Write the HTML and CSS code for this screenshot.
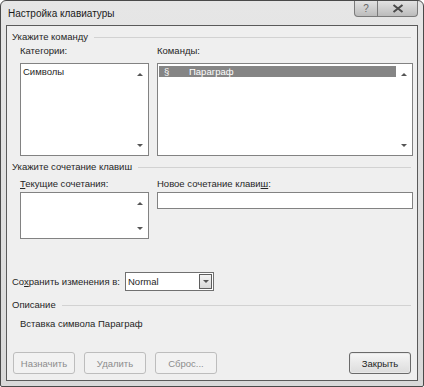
FILE: index.html
```html
<!DOCTYPE html>
<html lang="ru">
<head>
  <meta charset="UTF-8">
  <title>Настройка клавиатуры</title>
  <link rel="stylesheet" href="styles.css">
</head>
<body>

  <div class="window">
    <!-- Заголовок -->
    <div class="titlebar">
      <span class="title">Настройка клавиатуры</span>
      <div class="title-buttons">
        <div class="tbtn tbtn-help">?</div>
        <div class="tbtn tbtn-close">
          <svg width="12" height="9" viewBox="0 0 12 9"><path d="M1.5 1 L10.5 8 M10.5 1 L1.5 8" stroke="#4a4a4a" stroke-width="2" fill="none"/></svg>
        </div>
      </div>
    </div>

    <div class="client">
      <!-- Укажите команду -->
      <div class="group-title g1">Укажите команду</div>
      <div class="cols">
        <div class="col col-left">
          <div class="label">Категории:</div>
          <div class="listbox lb-big">
            <div class="item">Символы</div>
            <div class="scroll">
              <span class="arr up"></span>
              <span class="arr down"></span>
            </div>
          </div>
        </div>
        <div class="col col-right">
          <div class="label">Коман<u>д</u>ы:</div>
          <div class="listbox lb-big">
            <div class="item selected"><span class="sym">§</span>Параграф</div>
            <div class="scroll">
              <span class="arr up"></span>
              <span class="arr down"></span>
            </div>
          </div>
        </div>
      </div>

      <!-- Укажите сочетание клавиш -->
      <div class="group-title g2">Укажите сочетание клавиш</div>
      <div class="cols cols2">
        <div class="col col-left">
          <div class="label"><u>Т</u>екущие сочетания:</div>
          <div class="listbox lb-small">
            <div class="scroll">
              <span class="arr up"></span>
              <span class="arr down"></span>
            </div>
          </div>
        </div>
        <div class="col col-right">
          <div class="label">Новое сочетание клави<u>ш</u>:</div>
          <div class="textbox"></div>
        </div>
      </div>

      <div class="save-row">
        <span class="save-label">Со<u>х</u>ранить изменения в:</span>
        <div class="combo">
          <span class="combo-text">Normal</span>
          <div class="combo-btn"><span class="arr down"></span></div>
        </div>
      </div>

      <div class="group-title g3">Описание</div>
      <div class="desc">Вставка символа Параграф</div>

      <div class="buttons">
        <button class="btn" disabled>Назначить</button>
        <button class="btn" disabled>Удалить</button>
        <button class="btn" disabled>Сброс...</button>
        <span class="spacer"></span>
        <button class="btn btn-close">Закрыть</button>
      </div>
    </div>
  </div>

</body>
</html>
```

FILE: styles.css
```css
body {
  margin: 0;
  padding: 0;
  background: #fff;
  font-family: "Liberation Sans", Arial, sans-serif;
  font-size: 9.5px;
  color: #262626;
}

.window {
  width: 424px;
  height: 387px;
  box-sizing: border-box;
  border: 1px solid #4a4a4a;
  border-radius: 6px 6px 2px 2px;
  background: linear-gradient(to bottom, #e6e6e6, #d9d9d9);
  padding: 0 5px 5px 5px;
  display: flex;
  flex-direction: column;
}

.titlebar {
  height: 24px;
  display: flex;
  align-items: flex-start;
  justify-content: space-between;
}

.title {
  font-size: 10px;
  margin: 7px 0 0 2px;
  color: #1a1a1a;
}

.title-buttons {
  display: flex;
}

.tbtn {
  height: 15px;
  border: 1px solid #7a7a7a;
  border-top: none;
  background: linear-gradient(to bottom, #e2e2e2, #bbbbbb);
  display: flex;
  align-items: center;
  justify-content: center;
  color: #666;
  font-size: 10px;
}

.tbtn-help {
  width: 22px;
  border-radius: 0 0 0 4px;
}

.tbtn-close {
  width: 39px;
  border-left: none;
  border-radius: 0 0 4px 0;
}

.client {
  flex: 1;
  border: 1px solid #5a5a5a;
  background: #efefef;
  padding: 0 4px 0 5px;
  display: flex;
  flex-direction: column;
}

.group-title {
  display: flex;
  align-items: center;
  height: 14px;
  line-height: 14px;
}

.group-title::after {
  content: "";
  flex: 1;
  border-top: 1px solid #d2d2d2;
  margin: 0 2px 0 6px;
}

.g1 {
  margin-top: 4px;
}

.g2 {
  margin-top: 4px;
}

.g3 {
  margin-top: 7px;
}

.cols {
  display: flex;
  padding-left: 8px;
}

.col-left {
  width: 137px;
}

.col-right {
  flex: 1;
}

.label {
  height: 14px;
  line-height: 14px;
  margin-bottom: 5px;
}

.cols2 {
  margin-top: 3px;
}

.cols2 .label {
  margin-bottom: 1px;
}

.listbox {
  position: relative;
  background: #fff;
  border: 1px solid #828282;
  box-sizing: border-box;
}

.col-left .listbox {
  width: 129px;
}

.lb-big {
  height: 93px;
}

.lb-small {
  height: 47px;
}

.item {
  height: 11px;
  line-height: 11px;
  margin: 2px 1px;
  padding-left: 1px;
}

.item.selected {
  background: #858585;
  color: #fff;
  margin-right: 16px;
}

.sym {
  display: inline-block;
  width: 25px;
  padding-left: 4px;
}

.scroll {
  position: absolute;
  right: 1px;
  top: 1px;
  bottom: 1px;
  width: 14px;
  display: flex;
  flex-direction: column;
  justify-content: space-between;
  align-items: center;
  padding: 8px 0 7px;
  box-sizing: border-box;
}

.arr {
  width: 0;
  height: 0;
  border-left: 3px solid transparent;
  border-right: 3px solid transparent;
}

.arr.up {
  border-bottom: 3px solid #555;
}

.arr.down {
  border-top: 3px solid #555;
}

.textbox {
  height: 17px;
  background: #fff;
  border: 1px solid #828282;
  box-sizing: border-box;
}

.save-row {
  display: flex;
  align-items: center;
  margin-top: 33px;
  height: 19px;
}

.save-label {
  width: 113px;
  white-space: nowrap;
}

.combo {
  width: 89px;
  height: 19px;
  box-sizing: border-box;
  border: 1px solid #707070;
  background: #fff;
  display: flex;
  align-items: center;
}

.combo-text {
  flex: 1;
  padding-left: 2px;
}

.combo-btn {
  width: 13px;
  height: 15px;
  margin-right: 1px;
  border: 1px solid #5e5e5e;
  box-sizing: border-box;
  background: linear-gradient(to bottom, #f4f4f4, #d8d8d8);
  display: flex;
  align-items: center;
  justify-content: center;
}

.desc {
  margin-top: 5px;
  padding-left: 8px;
  height: 14px;
  line-height: 14px;
}

.buttons {
  display: flex;
  gap: 9px;
  margin-top: 21px;
  padding: 0 2px 0 1px;
}

.spacer {
  flex: 1;
}

.btn {
  width: 62px;
  height: 22px;
  font-family: inherit;
  font-size: 9.5px;
  border: 1px solid #bdbdbd;
  border-radius: 3px;
  background: #f2f2f2;
  color: #8c8c8c;
  padding: 0;
}

.btn-close {
  border: 1px solid #6a6a6a;
  background: linear-gradient(to bottom, #f6f6f6, #dcdcdc);
  color: #1e1e1e;
  box-shadow: inset 0 0 0 1px #e8e8e8;
}
```
